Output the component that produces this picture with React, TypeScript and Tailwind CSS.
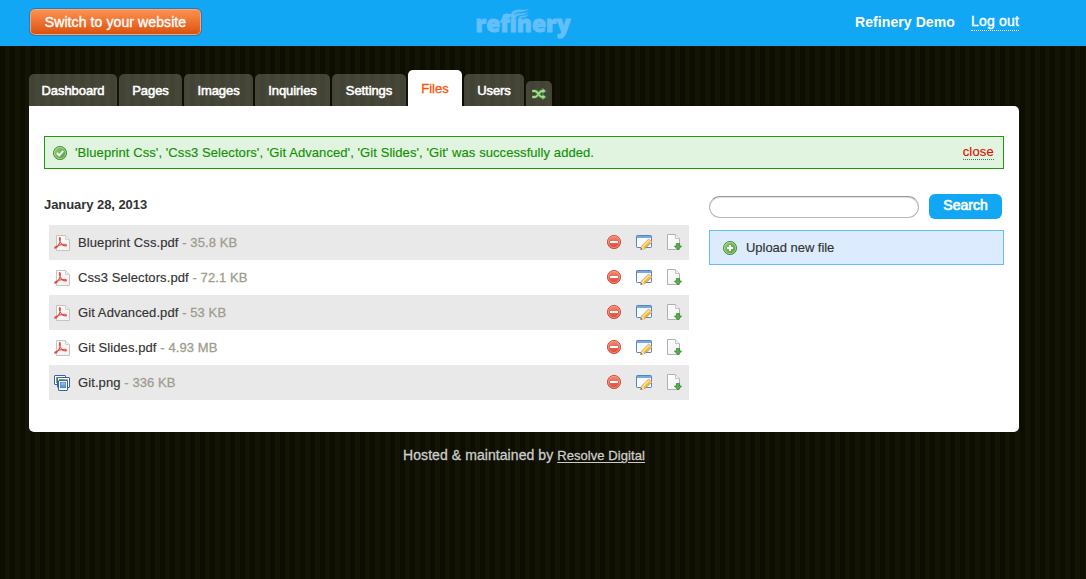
import React from "react";

const stroke = "[-webkit-text-stroke:0.35px_currentColor]";

const tabs = [
  { label: "Dashboard", width: "w-[88px]" },
  { label: "Pages", width: "w-[63px]" },
  { label: "Images", width: "w-[69px]" },
  { label: "Inquiries", width: "w-[75px]" },
  { label: "Settings", width: "w-[74px]" },
  { label: "Files", width: "w-[54px]", active: true },
  { label: "Users", width: "w-[60px]" },
];

const files = [
  { name: "Blueprint Css.pdf", size: "35.8 KB", kind: "pdf" },
  { name: "Css3 Selectors.pdf", size: "72.1 KB", kind: "pdf" },
  { name: "Git Advanced.pdf", size: "53 KB", kind: "pdf" },
  { name: "Git Slides.pdf", size: "4.93 MB", kind: "pdf" },
  { name: "Git.png", size: "336 KB", kind: "image" },
];

function Gradients() {
  return (
    <svg width="0" height="0" className="absolute">
      <defs>
        <linearGradient id="green" x1="0" y1="0" x2="1" y2="1">
          <stop offset="0" stopColor="#93cf7c" />
          <stop offset="1" stopColor="#4d9a3a" />
        </linearGradient>
        <linearGradient id="red" x1="0" y1="0" x2="0" y2="1">
          <stop offset="0" stopColor="#f58a72" />
          <stop offset="1" stopColor="#dd4535" />
        </linearGradient>
        <linearGradient id="paper" x1="0" y1="0" x2="1" y2="1">
          <stop offset="0" stopColor="#ffffff" />
          <stop offset="1" stopColor="#f0f0f0" />
        </linearGradient>
        <linearGradient id="photo" x1="0" y1="0" x2="0" y2="1">
          <stop offset="0" stopColor="#a8d3f5" />
          <stop offset="1" stopColor="#4587c9" />
        </linearGradient>
      </defs>
    </svg>
  );
}

function GreenDisc({ children }: { children: React.ReactNode }) {
  return (
    <svg width="16" height="16" viewBox="0 0 16 16" fill="none" className="block shrink-0">
      <circle cx="8" cy="8" r="6.6" fill="url(#green)" stroke="#478b35" strokeWidth="0.9" />
      <circle cx="8" cy="8" r="5.6" stroke="#b4dda4" strokeWidth="0.7" />
      {children}
    </svg>
  );
}

function PdfIcon() {
  return (
    <svg width="16" height="16" viewBox="0 0 16 16" fill="none" className="block shrink-0">
      <path d="M2.5 0.5H11.5L15.5 4.5V15.5H2.5Z" fill="url(#paper)" stroke="#c4c4c4" />
      <path d="M11.5 0.5V4.5H15.5" fill="#eee" stroke="#d0d0d0" />
      <path d="M5 2.5C7.2 2 6.3 6 5.6 8C4.6 10.5 2.5 12.8.9 13.3C0 12 3.3 10.6 5.9 10C8.5 9.4 12.2 9.2 12.5 10.3C12.3 11.5 9 10.6 7.5 9C6 7.3 5.2 5.7 5.2 3.2" stroke="#dd4b43" strokeWidth="1.1" strokeLinejoin="round" />
    </svg>
  );
}

function PicturesIcon() {
  return (
    <svg width="16" height="16" viewBox="0 0 16 16" fill="none" className="block shrink-0">
      <rect x="0.5" y="0.5" width="11" height="9" rx="0.5" fill="#fff" stroke="#3565a5" />
      <rect x="2" y="2" width="8" height="6" fill="#72ae63" />
      <rect x="3.5" y="2.5" width="12" height="10" rx="0.5" fill="#fff" stroke="#3565a5" />
      <rect x="5" y="4" width="5" height="7" fill="#72ae63" />
      <rect x="10" y="4" width="4" height="7" fill="#d797ac" />
      <rect x="4.5" y="5.5" width="9" height="10" rx="0.5" fill="#fff" stroke="#3565a5" />
      <rect x="6.3" y="7.3" width="5.4" height="5.4" fill="url(#photo)" stroke="#467db8" strokeWidth="0.7" />
    </svg>
  );
}

function DeleteIcon() {
  return (
    <svg width="16" height="16" viewBox="0 0 16 16" fill="none" className="block">
      <circle cx="8" cy="8" r="6.6" fill="url(#red)" stroke="#c8473c" strokeWidth="0.9" />
      <circle cx="8" cy="8" r="5.6" stroke="#f6a291" strokeWidth="0.7" />
      <rect x="4" y="7" width="8" height="2" rx="0.3" fill="#fff" />
    </svg>
  );
}

function EditIcon() {
  return (
    <svg width="16" height="16" viewBox="0 0 16 16" fill="none" className="block">
      <rect x="0.5" y="1.5" width="15" height="12" rx="0.7" fill="#f7fbff" stroke="#5684bd" />
      <path d="M1 2H15V4H1Z" fill="#75a8e5" />
      <path d="M4.7 15.5L5.9 11.8L12.7 5L15.9 8.1L9 14.5Z" fill="#f2b53f" stroke="#c78329" strokeWidth="0.7" />
      <path d="M6.9 12.4L13.3 6.1" stroke="#ffe783" strokeWidth="1.5" />
      <path d="M12.7 5L15.9 8.1L14.8 9.2L11.6 6.2Z" fill="#f0cbad" />
      <path d="M4.7 15.5L5.9 12L8.7 14.5Z" fill="#fae4c4" />
      <path d="M4.4 15.8L5.1 13.8L6.4 15.1Z" fill="#55544f" />
    </svg>
  );
}

function DownloadIcon() {
  return (
    <svg width="16" height="17" viewBox="0 0 16 17" fill="none" className="block">
      <path d="M1.5 0.5H9.5L13.5 4.5V15.5H1.5Z" fill="url(#paper)" stroke="#b0b1af" strokeLinejoin="round" />
      <path d="M9.5 0.5V4.5H13.5" fill="#f3f3f3" stroke="#c4c4c4" />
      <path d="M10.4 9.5H13.6V12H15.6L12 16L8.4 12H10.4Z" fill="#58ad4c" stroke="#2f8230" strokeWidth="0.7" />
    </svg>
  );
}

function ShuffleIcon() {
  return (
    <svg width="16" height="14" viewBox="0 0 16 14" fill="none" className="block">
      <path d="M1 4H4C7 4 8 10 11 10H13M1 10H4C7 10 8 4 11 4H13" stroke="#3f7f38" strokeWidth="3.4" />
      <path d="M11.2 1L15.3 4L11.2 7ZM11.2 7L15.3 10L11.2 13Z" fill="#a4da92" stroke="#3f7f38" strokeWidth="0.8" />
      <path d="M1.3 4H4C7 4 8 10 11 10H12.5M1.3 10H4C7 10 8 4 11 4H12.5" stroke="#a4da92" strokeWidth="1.9" />
    </svg>
  );
}

function Logo() {
  return (
    <svg width="104" height="41" viewBox="0 0 104 41" className="block">
      <text x="4.5" y="27" fontFamily="Open Sans, sans-serif" fontWeight="800" fontSize="23.5" textLength="95" lengthAdjust="spacingAndGlyphs" fill="#63bffa" stroke="#63bffa" strokeWidth="1">refinery</text>
      <path d="M40 8C45 2 50 6 58 4C53 9 47 5 42 10ZM42.500 10.500C47 6 52 10 57.500 6.500C54 12 49 8.500 45 12ZM47 12.500C51 9 54 12 58 9C55 14 51 12 49 13.500Z" fill="#58baf8" />
    </svg>
  );
}

export default function App() {
  return (
    <div className="h-[579px] w-[1086px] overflow-hidden bg-[#0d0e01] bg-[repeating-linear-gradient(90deg,#0d0e00_0px,#0d0e00_5px,#131405_5px,#131405_10px)] font-['Liberation_Sans',Arial,sans-serif] text-[13px] text-[#333]">
      <Gradients />
      <header className="flex h-[46px] items-start bg-[#11a7f5] text-white">
        <button className={`ml-[29px] mt-2 h-7 w-[173px] rounded-[6px] border border-[#1681c8] bg-linear-to-b from-[#ff9350] to-[#d94f00] text-[14px] leading-6 tracking-[0.1px] shadow-[inset_0_0_0_1px_#ffa570] ${stroke}`}>
          Switch to your website
        </button>
        <div className="ml-[269px] mt-[5px]"><Logo /></div>
        <div className="ml-[280px] mt-3 flex items-start">
          <b className="w-[116px] text-[14px] leading-5 tracking-[0.08px]">Refinery Demo</b>
          <a className={`mt-px border-b border-dotted border-white text-[14px] leading-[17px] tracking-[0.2px] ${stroke}`}>Log out</a>
        </div>
      </header>

      <nav className="ml-[29px] flex h-[60px] items-end gap-[2px]">
        {tabs.map((t) =>
          t.active ? (
            <a key={t.label} className={`${t.width} h-9 rounded-t-[5px] bg-white text-center text-[13px] leading-[37px] text-[#ff5105] [-webkit-text-stroke:0.3px_currentColor]`}>{t.label}</a>
          ) : (
            <a key={t.label} className={`${t.width} h-8 rounded-t-[5px] bg-[#fffff0]/22 text-center text-[13px] leading-[33px] tracking-[-0.08px] text-white [-webkit-text-stroke:0.55px_currentColor]`}>{t.label}</a>
          ),
        )}
        <a className="flex h-[25px] w-[26px] items-center justify-center rounded-t-[5px] bg-[#fffff0]/22"><ShuffleIcon /></a>
      </nav>

      <main className="ml-[29px] h-[326px] w-[990px] rounded-[5px] rounded-tl-none bg-white pl-[15px] pt-[30px]">
        <div className="flex h-[33px] w-[960px] items-center border border-[#22990b] bg-[#e1f4df] pl-[7px] pr-[9px] text-[#129105]">
          <GreenDisc><path d="M4.8 8L7.2 10.300L11.200 5.800" stroke="#fff" strokeWidth="1.9" /></GreenDisc>
          <span className="ml-[7px] grow tracking-[0.077px] [-webkit-text-stroke:0.15px_currentColor]">'Blueprint Css', 'Css3 Selectors', 'Git Advanced', 'Git Slides', 'Git' was successfully added.</span>
          <a className="-mt-px border-b border-dotted border-[#55744f] leading-[15px] tracking-[0.2px] text-[#e01000] [-webkit-text-stroke:0.15px_currentColor]">close</a>
        </div>
        <div className="flex">
          <section className="w-[665px]">
            <h3 className="mt-[25px] h-[31px] font-bold leading-[22px] tracking-[-0.06px]">January 28, 2013</h3>
            <ul className="ml-[5px] w-[640px]">
              {files.map((f) => (
                <li key={f.name} className="flex h-[35px] items-center pl-[5px] odd:bg-[#e9e9e9]">
                  {f.kind === "pdf" ? <PdfIcon /> : <PicturesIcon />}
                  <span className="ml-2 grow tracking-[0.09px] [-webkit-text-stroke:0.15px_currentColor]">{f.name} <span className="text-[#a09c8e] [-webkit-text-stroke:0.3px_currentColor]">- {f.size}</span></span>
                  <span className="mr-[7px] flex gap-[14px]"><DeleteIcon /><EditIcon /><DownloadIcon /></span>
                </li>
              ))}
            </ul>
          </section>
          <aside className="w-[295px] pt-[25px]">
            <form className="flex h-[25px] items-center">
              <input className="mt-[1px] h-[22px] w-[210px] rounded-full border border-[#b8b8b8] border-t-[#999] bg-white px-3 shadow-[inset_0_1px_1px_#ddd] outline-none" />
              <button type="button" className="ml-[10px] h-[25px] w-[73px] rounded-[6px] bg-[#11a7f5] pb-[2px] text-[14px] leading-[23px] text-white [-webkit-text-stroke:0.65px_currentColor]">Search</button>
            </form>
            <a className="mt-[11px] flex h-[35px] items-center border border-[#61bff9] bg-[#dcecfe] pl-3">
              <GreenDisc><path d="M8 5V11M5 8H11" stroke="#fff" strokeWidth="2" /></GreenDisc>
              <span className="ml-2 tracking-[-0.04px] [-webkit-text-stroke:0.15px_currentColor]">Upload new file</span>
            </a>
          </aside>
        </div>
      </main>
      <footer className="ml-[29px] mt-[13px] w-[990px] text-center text-[14px] leading-5 tracking-[0.07px] text-[#ccc] [-webkit-text-stroke:0.3px_currentColor]">
        Hosted &amp; maintained by <a className="text-[13px] underline underline-offset-2">Resolve Digital</a>
      </footer>
    </div>
  );
}
